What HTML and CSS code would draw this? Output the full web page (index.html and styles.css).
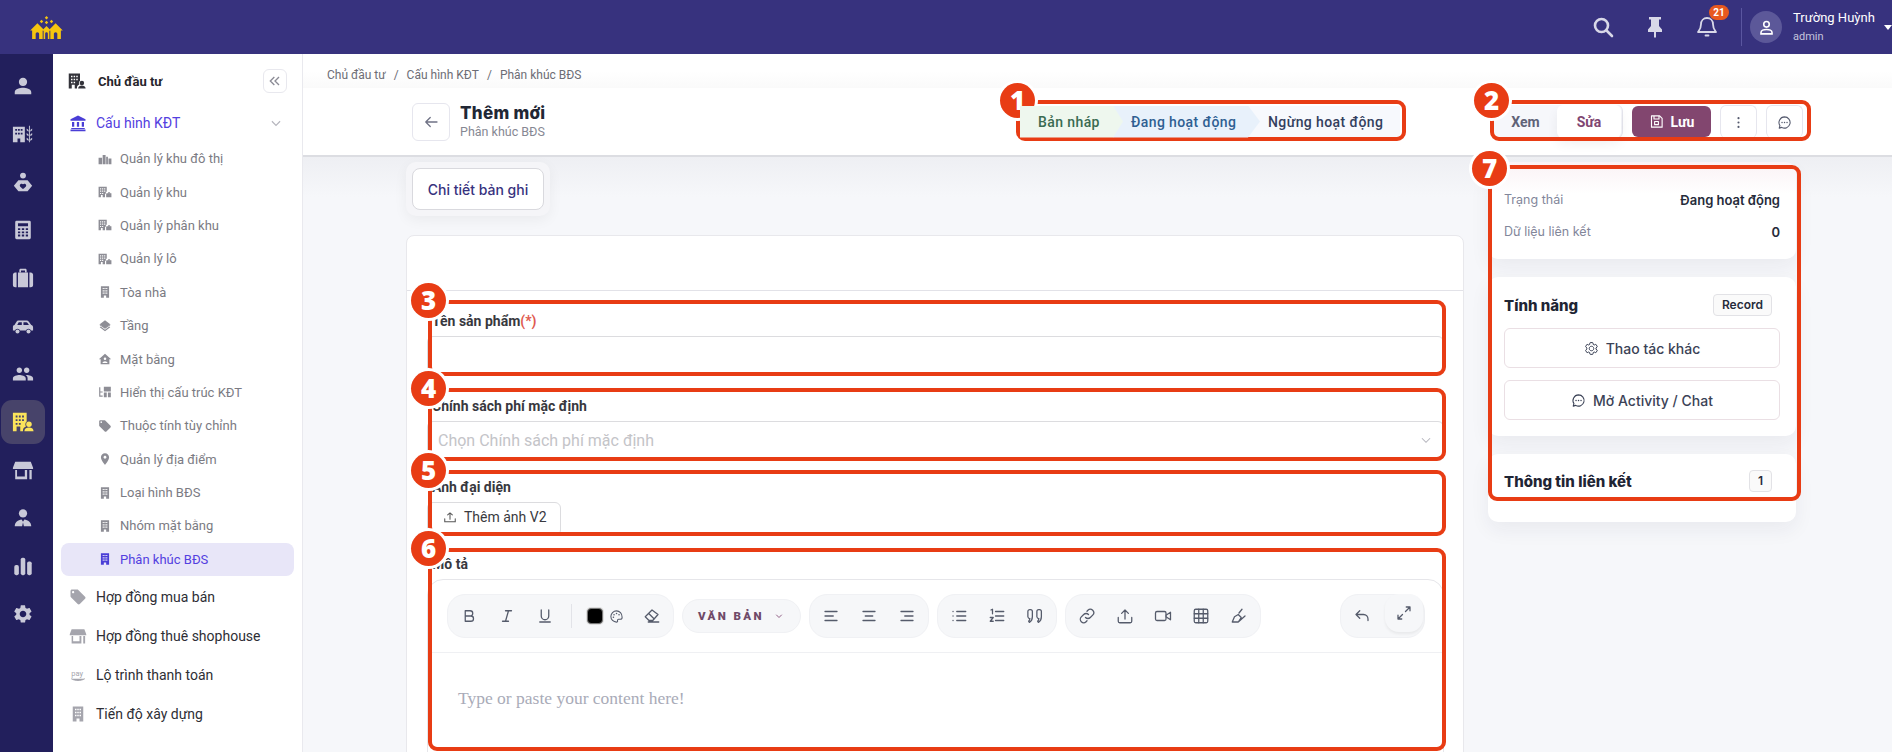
FILE: index.html
```html
<!DOCTYPE html>
<html lang="vi">
<head>
  <meta charset="UTF-8">
  <title>Thêm mới - Phân khúc BĐS</title>
  <link rel="stylesheet" href="styles.css">
</head>
<body>

  <svg class="defs" width="0" height="0">
    <symbol id="i-person" viewBox="0 0 24 24"><path d="M12 12c2.600 0 4.500-2 4.500-4.500S14.600 3 12 3 7.500 5 7.500 7.500 9.400 12 12 12zm0 2c-3 0-9 1.500-9 4.500V21h18v-2.500c0-3-6-4.500-9-4.500z"/></symbol>
    <symbol id="i-farm" viewBox="0 0 24 24"><path fill-rule="evenodd" d="M1 4h13v17H9v-4H6v4H1V4zm2.500 2.500v2h2v-2h-2zm3 0v2h2v-2h-2zm3 0v2h2v-2h-2zm-6 4v2h2v-2h-2zm3 0v2h2v-2h-2zm3 0v2h2v-2h-2z"/><path d="M18.500 3h1v18h-1zM16 6l2 1.500v2L16 8zm6 0l-2 1.500v2L22 8zm-6 5l2 1.500v2L16 13zm6 0l-2 1.500v2L22 13zm-6 5l2 1.500v2L16 18zm6 0l-2 1.500v2L22 18z"/></symbol>
    <symbol id="i-care" viewBox="0 0 24 24"><circle cx="12" cy="5" r="3.200"/><path fill-rule="evenodd" d="M7 10h10l5 6-5 6H7l-5-6 5-6zm5 4.500c-1-1.300-3.500-.6-3.500 1.300 0 1.500 2 2.700 3.500 3.700 1.500-1 3.500-2.200 3.500-3.700 0-1.900-2.500-2.600-3.500-1.300z"/></symbol>
    <symbol id="i-calc" viewBox="0 0 24 24"><path fill-rule="evenodd" d="M5 2h14a1.500 1.500 0 0 1 1.500 1.500v17A1.500 1.500 0 0 1 19 22H5a1.500 1.500 0 0 1-1.500-1.500v-17A1.500 1.500 0 0 1 5 2zm1.500 2.500V8h11V4.500h-11zm0 5.500v2h2.500v-2H6.500zm4.200 0v2h2.600v-2h-2.600zm4.300 0v2h2.500v-2H15zm-8.500 3.500v2h2.500v-2H6.500zm4.200 0v2h2.600v-2h-2.600zm4.300 0v2h2.500v-2H15zm-8.500 3.500v2h2.500v-2H6.500zm4.200 0v2h2.600v-2h-2.600zm4.300 0v2h2.500v-2H15z"/></symbol>
    <symbol id="i-case" viewBox="0 0 24 24"><path fill-rule="evenodd" d="M8 6V3.500C8 2.700 8.700 2 9.500 2h5c.8 0 1.500.7 1.500 1.500V6h-1.800V3.800H9.800V6H8z"/><path d="M1 8.500C1 7.100 2.100 6 3.500 6H5v16H3.500C2.100 22 1 20.900 1 19.500v-11zM6.500 6h11v16h-11zM19 6h1.500C21.900 6 23 7.100 23 8.500v11c0 1.400-1.100 2.500-2.500 2.500H19V6z"/></symbol>
    <symbol id="i-car" viewBox="0 0 24 24"><path fill-rule="evenodd" d="M7 6h9c1 0 1.800.5 2.400 1.300L21 11c1.200.3 2 1.200 2 2.500V17h-2.200a3 3 0 0 0-5.600 0H8.800a3 3 0 0 0-5.600 0H1v-4c0-1.100.7-1.800 1.700-2l2.200-3.700C5.400 6.500 6.100 6 7 6zm.3 2L5.700 11h5V8H7.300zm5.200 0v3h6l-1.700-2.500c-.3-.3-.6-.5-1-.5h-3.300z"/><circle cx="6" cy="18" r="2.200"/><circle cx="18" cy="18" r="2.200"/></symbol>
    <symbol id="i-people" viewBox="0 0 24 24"><path d="M16 11c1.700 0 3-1.300 3-3s-1.300-3-3-3-3 1.300-3 3 1.300 3 3 3zm-8 0c1.700 0 3-1.300 3-3S9.700 5 8 5 5 6.300 5 8s1.300 3 3 3zm0 2c-2.300 0-7 1.200-7 3.500V19h14v-2.500c0-2.300-4.700-3.500-7-3.500zm8 0c-.3 0-.6 0-1 .05 1.200.85 2 2 2 3.450V19h6v-2.500c0-2.300-4.700-3.500-7-3.500z"/></symbol>
    <symbol id="i-owner" viewBox="0 0 24 24"><path fill-rule="evenodd" d="M1 2h15v9.500a4 4 0 0 0-1.500 3 4 4 0 0 0 .7 2.300C13 17.600 12 19 12 21v1H9v-5H5v5H1V2zm3 3v2h2V5H4zm3.500 0v2h2V5h-2zM11 5v2h2V5h-2zM4 9v2h2V9H4zm3.500 0v2h2V9h-2zM11 9v2h2V9h-2zM4 13v2h2v-2H4zm3.500 0v2h2v-2h-2z"/><circle cx="18.500" cy="14.500" r="3"/><path d="M13.500 22c0-2.800 2.500-4 5-4s5 1.200 5 4z"/></symbol>
    <symbol id="i-store" viewBox="0 0 24 24"><path fill-rule="evenodd" d="M3.500 3h17L23 9.500V11H1V9.500L3.500 3zM3 12h2.500v7H14v-7h2.500v10h-13V12zm16 0h2.500v10H19V12z"/></symbol>
    <symbol id="i-agent" viewBox="0 0 24 24"><circle cx="12" cy="7" r="4.500"/><path d="M3 21c0-4.500 3.600-7 7.500-7.500L12 16l1.500-2.500C17.400 14 21 16.500 21 21h-8l-1-4-1 4z"/></symbol>
    <symbol id="i-bars" viewBox="0 0 24 24"><rect x="2.500" y="11" width="5" height="11" rx="2"/><rect x="9.500" y="3" width="5" height="19" rx="2"/><rect x="16.500" y="7" width="5" height="15" rx="2"/></symbol>
    <symbol id="i-gear" viewBox="0 0 24 24"><path fill-rule="evenodd" d="M19.100 12.900c.1-.3.1-.6.1-.9s0-.6-.1-.9l2-1.600c.2-.1.200-.4.100-.6l-1.900-3.300c-.1-.2-.4-.3-.6-.2l-2.400 1c-.5-.4-1-.7-1.600-.9L14.300 2.900c0-.2-.2-.4-.5-.4H10c-.2 0-.4.200-.5.400L9.100 5.500c-.6.200-1.100.6-1.600.9l-2.400-1c-.2-.1-.5 0-.6.200L2.600 8.900c-.1.200-.1.500.1.600l2 1.600c0 .2-.1.600-.1.900s0 .6.100.9l-2 1.600c-.2.100-.2.400-.1.600l1.900 3.300c.1.200.4.300.6.200l2.400-1c.5.400 1 .7 1.600.9l.4 2.500c0 .2.200.4.500.4h3.800c.2 0 .4-.2.500-.4l.4-2.500c.6-.2 1.100-.6 1.600-.9l2.400 1c.2.100.5 0 .6-.2l1.900-3.300c.1-.2.100-.5-.1-.6l-2.200-1.600zM12 15.600c-2 0-3.600-1.600-3.600-3.600s1.600-3.600 3.600-3.600 3.600 1.600 3.600 3.600-1.600 3.600-3.600 3.600z"/></symbol>
    <symbol id="i-bank" viewBox="0 0 24 24"><path d="M12 2L2 7v2h20V7L12 2zM4 10.500h3V17H4zm6.500 0h3V17h-3zm6.500 0h3V17h-3zM3 18.500h18V20H3zM2 20.800h20V23H2z"/></symbol>
    <symbol id="i-city" viewBox="0 0 24 24"><path fill-rule="evenodd" d="M1 10h6v11H1V10zm7-5h5v16H8V5zm6 3h3v13h-3V8zm4 3h5v10h-5V11z"/></symbol>
    <symbol id="i-zone" viewBox="0 0 24 24"><path fill-rule="evenodd" d="M1 3h14v8.500h-1.500V15H12v6H8v-4H5v4H1V3zm2.500 2.500v2h2v-2h-2zm3.500 0v2h2v-2H7zm3.500 0v2h2v-2h-2zm-7 4v2h2v-2h-2zm3.500 0v2h2v-2H7zm3.500 0v2h2v-2h-2zm-7 4v2h2v-2h-2zm3.500 0v2h2v-2H7z"/><path d="M15 14h8v7h-9v-6zM17 14c0-1.400 1-2.200 2-2.200s2 .8 2 2.200h-1.200c0-.6-.3-1-.8-1s-.8.4-.8 1z"/></symbol>
    <symbol id="i-tower" viewBox="0 0 24 24"><path fill-rule="evenodd" d="M5 2h14v20h-5v-4h-4v4H5V2zm3 3v2h2V5H8zm3 0v2h2V5h-2zm3 0v2h2V5h-2zM8 9v2h2V9H8zm3 0v2h2V9h-2zm3 0v2h2V9h-2zm-6 4v2h2v-2H8zm3 0v2h2v-2h-2zm3 0v2h2v-2h-2z"/></symbol>
    <symbol id="i-layers" viewBox="0 0 24 24"><path d="M12 18.500l-7.400-5.700L3 14.100l9 7 9-7-1.600-1.300-7.400 5.700zM12 16l7.400-5.700L21 9l-9-7-9 7 1.600 1.300L12 16z"/><path d="M12 14.600L3 9v1.800l9 6 9-6V9z"/></symbol>
    <symbol id="i-house" viewBox="0 0 24 24"><path fill-rule="evenodd" d="M12 3L1.500 12.500h3V21h15v-8.500h3L12 3zm0 6.500a2.200 2.200 0 1 1 0 4.400 2.200 2.200 0 0 1 0-4.400zM7.500 19c0-2 2.700-3.300 4.500-3.300s4.500 1.300 4.500 3.300h-9z"/></symbol>
    <symbol id="i-tree" viewBox="0 0 24 24"><path d="M2 4h2v16H2zM4 11h4v2H4zM4 18h4v2H4zM10 3h12v8H10zM10 13h5v8h-5zM17 13h5v8h-5z"/></symbol>
    <symbol id="i-tag" viewBox="0 0 24 24"><path d="M21.400 11.600l-9-9C12 2.200 11.500 2 11 2H4C2.900 2 2 2.900 2 4v7c0 .5.200 1 .6 1.400l9 9c.4.400.9.600 1.400.6s1-.2 1.400-.6l7-7c.4-.4.600-.9.600-1.400s-.2-1-.6-1.400zM5.500 7C4.700 7 4 6.300 4 5.500S4.700 4 5.500 4 7 4.700 7 5.500 6.300 7 5.500 7z"/></symbol>
    <symbol id="i-pin" viewBox="0 0 24 24"><path d="M12 2C8.100 2 5 5.100 5 9c0 5.300 7 13 7 13s7-7.700 7-13c0-3.900-3.100-7-7-7zm0 9.500c-1.400 0-2.500-1.100-2.500-2.500s1.100-2.500 2.500-2.500 2.500 1.100 2.500 2.500-1.100 2.500-2.500 2.500z"/></symbol>
  </svg>

  <header class="topbar">
    <svg class="logo" viewBox="0 0 34 24" fill="#f6c50f">
      <path d="M17 0l1.800 1.800L17 3.600l-1.800-1.800zM11.800 4l1.800 1.800-1.800 1.800L10 5.800zM22.200 4L24 5.800l-1.800 1.800-1.800-1.800zM17 5l1.800 1.800L17 8.600l-1.800-1.800z"/>
      <path fill-rule="evenodd" d="M7.500 7.500L15 15h-2v9H2v-9H0zM7.500 17c-1 0-1.800.8-1.800 1.800V24h3.600v-5.200c0-1-.8-1.800-1.800-1.800z"/>
      <path fill-rule="evenodd" d="M26.500 7.500L34 15h-2v9H21v-9h-2zM26.500 17c-1 0-1.800.8-1.800 1.800V24h3.600v-5.200c0-1-.8-1.800-1.800-1.800z"/>
      <path fill-rule="evenodd" d="M17 10.500l4.500 4.500H20v9h-6v-9h-1.500zM17 17c-.8 0-1.400.6-1.400 1.400V24h2.800v-5.600c0-.8-.6-1.400-1.400-1.400z"/>
    </svg>
    <div class="top-tools">
      <svg class="top-icon" viewBox="0 0 24 24" fill="none" stroke="#d8d8e8" stroke-width="2.600" stroke-linecap="round"><circle cx="10.500" cy="10.500" r="6.500"/><path d="M15.500 15.500L21 21"/></svg>
      <svg class="top-icon" viewBox="0 0 24 24" fill="#d8d8e8"><path d="M6 2h12v2.500h-2V11l3 3.500V17h-6v5.500h-2V17H5v-2.500L8 11V4.500H6z"/></svg>
      <div class="bell">
        <svg class="top-icon" viewBox="0 0 24 24" fill="none" stroke="#d8d8e8" stroke-width="1.800" stroke-linecap="round" stroke-linejoin="round"><path d="M12 3c-3.500 0-6 2.700-6 6.200 0 4.500-2 6.300-3 7.800h18c-1-1.500-3-3.300-3-7.800C18 5.700 15.500 3 12 3z"/><path d="M10.500 20.500h3"/></svg>
        <span class="bell-count">21</span>
      </div>
    </div>
    <div class="user">
      <div class="avatar">
        <svg viewBox="0 0 24 24" fill="none" stroke="#fff" stroke-width="2"><circle cx="12" cy="8" r="3.500"/><path d="M5 20v-1.500c0-2.500 3.500-4 7-4s7 1.500 7 4V20z"/></svg>
      </div>
      <div class="user-text">
        <div class="user-name">Trường Huỳnh</div>
        <div class="user-role">admin</div>
      </div>
      <span class="caret"></span>
    </div>
  </header>

  <div class="shell">
    <nav class="rail">
      <a class="rail-item"><svg><use href="#i-person"/></svg></a>
      <a class="rail-item"><svg><use href="#i-farm"/></svg></a>
      <a class="rail-item"><svg><use href="#i-care"/></svg></a>
      <a class="rail-item"><svg><use href="#i-calc"/></svg></a>
      <a class="rail-item"><svg><use href="#i-case"/></svg></a>
      <a class="rail-item"><svg><use href="#i-car"/></svg></a>
      <a class="rail-item"><svg><use href="#i-people"/></svg></a>
      <a class="rail-item rail-active"><svg><use href="#i-owner"/></svg></a>
      <a class="rail-item"><svg><use href="#i-store"/></svg></a>
      <a class="rail-item"><svg><use href="#i-agent"/></svg></a>
      <a class="rail-item"><svg><use href="#i-bars"/></svg></a>
      <a class="rail-item"><svg><use href="#i-gear"/></svg></a>
    </nav>

    <aside class="sidebar">
      <div class="side-head">
        <svg class="side-head-icon"><use href="#i-owner"/></svg>
        <span class="side-head-text">Chủ đầu tư</span>
        <button class="collapse">
          <svg viewBox="0 0 24 24" fill="none" stroke="#8b8b95" stroke-width="2"><path d="M11 6l-6 6 6 6M18 6l-6 6 6 6"/></svg>
        </button>
      </div>
      <div class="side-top side-open">
        <svg class="side-top-icon"><use href="#i-bank"/></svg>
        <span>Cấu hình KĐT</span>
        <svg class="side-chevron" viewBox="0 0 24 24" fill="none" stroke="#b5b5bd" stroke-width="2"><path d="M5 9l7 7 7-7"/></svg>
      </div>
      <a class="side-sub"><svg><use href="#i-city"/></svg>Quản lý khu đô thị</a>
      <a class="side-sub"><svg><use href="#i-zone"/></svg>Quản lý khu</a>
      <a class="side-sub"><svg><use href="#i-zone"/></svg>Quản lý phân khu</a>
      <a class="side-sub"><svg><use href="#i-zone"/></svg>Quản lý lô</a>
      <a class="side-sub"><svg><use href="#i-tower"/></svg>Tòa nhà</a>
      <a class="side-sub"><svg><use href="#i-layers"/></svg>Tầng</a>
      <a class="side-sub"><svg><use href="#i-house"/></svg>Mặt bằng</a>
      <a class="side-sub"><svg><use href="#i-tree"/></svg>Hiển thị cấu trúc KĐT</a>
      <a class="side-sub"><svg><use href="#i-tag"/></svg>Thuộc tính tùy chỉnh</a>
      <a class="side-sub"><svg><use href="#i-pin"/></svg>Quản lý địa điểm</a>
      <a class="side-sub"><svg><use href="#i-tower"/></svg>Loại hình BĐS</a>
      <a class="side-sub"><svg><use href="#i-tower"/></svg>Nhóm mặt bằng</a>
      <a class="side-sub side-sub-active"><svg><use href="#i-tower"/></svg>Phân khúc BĐS</a>
      <div class="side-top side-after"><svg class="side-top-icon"><use href="#i-tag"/></svg><span>Hợp đồng mua bán</span></div>
      <div class="side-top"><svg class="side-top-icon"><use href="#i-store"/></svg><span>Hợp đồng thuê shophouse</span></div>
      <div class="side-top">
        <svg class="side-top-icon" viewBox="0 0 24 24" fill="none" stroke="#a5a5ad" stroke-width="1.300"><text x="3" y="13" font-size="10" font-family="Roboto" fill="#a5a5ad" stroke="none">pay</text><path d="M3 17c5 3 13 3 18 0"/></svg>
        <span>Lộ trình thanh toán</span>
      </div>
      <div class="side-top"><svg class="side-top-icon"><use href="#i-tower"/></svg><span>Tiến độ xây dựng</span></div>
    </aside>

    <main class="main">
      <div class="breadcrumb">
        <span>Chủ đầu tư</span><span class="crumb-sep">/</span><span>Cấu hình KĐT</span><span class="crumb-sep">/</span><span>Phân khúc BĐS</span>
      </div>

      <div class="page-head">
        <div class="page-title-wrap">
          <button class="back-btn">
            <svg viewBox="0 0 24 24" fill="none" stroke="#6f7285" stroke-width="1.700" stroke-linecap="round" stroke-linejoin="round"><path d="M20 12H5M11 6l-6 6 6 6"/></svg>
          </button>
          <div>
            <div class="page-title">Thêm mới</div>
            <div class="page-sub">Phân khúc BĐS</div>
          </div>
        </div>

        <div class="stepper">
          <span class="step step-draft">Bản nháp</span>
          <span class="step step-active">Đang hoạt động</span>
          <span class="step step-stop">Ngừng hoạt động</span>
        </div>

        <div class="actions">
          <div class="segment">
            <span class="seg-view">Xem</span>
            <span class="seg-edit">Sửa</span>
          </div>
          <button class="save-btn">
            <svg viewBox="0 0 24 24" fill="none" stroke="#fff" stroke-width="1.800" stroke-linejoin="round"><path d="M4 3h13l4 4v14H4z"/><path d="M8 3v5h8V3"/><rect x="9" y="12" width="6" height="5"/></svg>
            Lưu
          </button>
          <button class="icon-act">
            <svg viewBox="0 0 24 24" fill="#555a6e"><circle cx="12" cy="5" r="1.700"/><circle cx="12" cy="12" r="1.700"/><circle cx="12" cy="19" r="1.700"/></svg>
          </button>
          <button class="icon-act">
            <svg viewBox="0 0 24 24" fill="none" stroke="#555a6e" stroke-width="1.700" stroke-linejoin="round"><path d="M12 3a9 9 0 1 1-4.500 16.800L3.500 21l1.200-4A9 9 0 0 1 12 3z"/><path d="M8 12h.1M12 12h.1M16 12h.1" stroke-width="2.200" stroke-linecap="round"/></svg>
          </button>
        </div>
      </div>

      <div class="page-body">
        <div class="form-col">
          <div class="tabs">
            <span class="tab">Chi tiết bản ghi</span>
          </div>

          <section class="card">
            <div class="card-top"></div>

            <div class="field">
              <label class="field-label">Tên sản phẩm<span class="req">(*)</span></label>
              <div class="input input-spaced"></div>
            </div>

            <div class="field">
              <label class="field-label">Chính sách phí mặc định</label>
              <div class="input select">
                <span class="placeholder">Chọn Chính sách phí mặc định</span>
                <svg viewBox="0 0 24 24" fill="none" stroke="#b5b5bd" stroke-width="1.800"><path d="M5 9l7 7 7-7"/></svg>
              </div>
            </div>

            <div class="field">
              <label class="field-label">Ảnh đại diện</label>
              <button class="upload">
                <svg viewBox="0 0 24 24" fill="none" stroke="#555" stroke-width="1.800" stroke-linecap="round"><path d="M12 16V5M8 8.500L12 5l4 3.500M3 15v5h18v-5"/></svg>
                Thêm ảnh V2
              </button>
            </div>

            <div class="field field-last">
              <label class="field-label">Mô tả</label>
              <div class="editor">
                <div class="toolbar">
                  <div class="tool-group">
                    <span class="tool"><svg viewBox="0 0 24 24"><path d="M7 5h6.500a3.500 3.500 0 0 1 0 7H7zM7 12h7.500a3.500 3.500 0 0 1 0 7H7z"/></svg></span>
                    <span class="tool"><svg viewBox="0 0 24 24"><path d="M10 5h8M6 19h8M14 5l-4 14"/></svg></span>
                    <span class="tool"><svg viewBox="0 0 24 24"><path d="M7 4v8a5 5 0 0 0 10 0V4M5 20h14"/></svg></span>
                    <span class="tool-sep"></span>
                    <span class="tool-color">
                      <span class="swatch"></span>
                      <svg viewBox="0 0 24 24"><path d="M12 3a9 9 0 0 0 0 18c1.500 0 2-1 1.700-2-.4-1.300.3-2.500 1.800-2.500H18c1.800 0 3-1.500 3-3.500 0-5.500-4-10-9-10z"/><path d="M8 9h.1M12 7h.1M16 9h.1M7 13h.1" stroke-width="2.400" stroke-linecap="round"/></svg>
                    </span>
                    <span class="tool"><svg viewBox="0 0 24 24"><path d="M3 13l9-9 8 6-7 8H8zM7 20h14M8 9l7 7"/></svg></span>
                  </div>
                  <div class="tool-group tool-select">
                    <span class="select-text">VĂN BẢN</span>
                    <svg viewBox="0 0 24 24"><path d="M7 10l5 5 5-5"/></svg>
                  </div>
                  <div class="tool-group">
                    <span class="tool"><svg viewBox="0 0 24 24"><path d="M4 6h16M4 12h11M4 18h16"/></svg></span>
                    <span class="tool"><svg viewBox="0 0 24 24"><path d="M4 6h16M7 12h10M4 18h16"/></svg></span>
                    <span class="tool"><svg viewBox="0 0 24 24"><path d="M4 6h16M9 12h11M4 18h16"/></svg></span>
                  </div>
                  <div class="tool-group">
                    <span class="tool"><svg viewBox="0 0 24 24"><path d="M9 6h12M9 12h12M9 18h12M4 6h.1M4 12h.1M4 18h.1"/></svg></span>
                    <span class="tool"><svg viewBox="0 0 24 24"><path d="M10 6h11M10 12h11M10 18h11M4 4l2-1v6M3 14h4l-4 5h4"/></svg></span>
                    <span class="tool"><svg viewBox="0 0 24 24"><path d="M2.500 6A2.500 2.500 0 0 1 5 3.500h1A2.500 2.500 0 0 1 8.500 6v7c0 3.500-1.500 6-4 7.500L3.500 19c1-.8 1.500-2 1.700-3.500A3 3 0 0 1 2.500 13zM14.500 6A2.500 2.500 0 0 1 17 3.500h1A2.500 2.500 0 0 1 20.500 6v7c0 3.500-1.500 6-4 7.500l-1-1.500c1-.8 1.500-2 1.700-3.500A3 3 0 0 1 14.500 13z"/></svg></span>
                  </div>
                  <div class="tool-group">
                    <span class="tool"><svg viewBox="0 0 24 24"><path d="M10 14a4.500 4.500 0 0 0 6.400 0l3.200-3.200a4.500 4.500 0 0 0-6.400-6.400L12 5.600M14 10a4.500 4.500 0 0 0-6.400 0l-3.200 3.200a4.500 4.500 0 0 0 6.400 6.400l1.200-1.200"/></svg></span>
                    <span class="tool"><svg viewBox="0 0 24 24"><path d="M12 16V4M7.500 8.500L12 4l4.500 4.500M3 14v5a2 2 0 0 0 2 2h14a2 2 0 0 0 2-2v-5"/></svg></span>
                    <span class="tool"><svg viewBox="0 0 24 24"><rect x="2" y="6" width="14" height="12" rx="2"/><path d="M16 11l6-4v10l-6-4"/></svg></span>
                    <span class="tool"><svg viewBox="0 0 24 24"><rect x="3" y="3" width="18" height="18" rx="2"/><path d="M3 9h18M3 15h18M9 3v18M15 3v18"/></svg></span>
                    <span class="tool"><svg viewBox="0 0 24 24"><path d="M3 20h8l9-8M3 20l3-7 5-3 4 4-4 6M12 8l4-5"/></svg></span>
                  </div>
                  <div class="tool-group tool-end">
                    <span class="tool"><svg viewBox="0 0 24 24"><path d="M4 10l5-5M4 10l5 5M4 10h10a6 6 0 0 1 6 6v2"/></svg></span>
                    <span class="tool tool-full"><svg viewBox="0 0 24 24"><path d="M14 10l6-6M15 4h5v5M10 14l-6 6M4 15v5h5"/></svg></span>
                  </div>
                </div>
                <div class="editor-body">Type or paste your content here!</div>
              </div>
            </div>
          </section>
        </div>

        <div class="info-col">
          <section class="info-card info-status">
            <div class="info-row"><span class="info-key">Trạng thái</span><span class="info-val">Đang hoạt động</span></div>
            <div class="info-row"><span class="info-key">Dữ liệu liên kết</span><span class="info-val">0</span></div>
          </section>
          <section class="info-card info-features">
            <div class="info-title-row"><span class="info-title">Tính năng</span><span class="chip">Record</span></div>
            <button class="wide-btn">
              <svg class="gear-line"><use href="#i-gear"/></svg>
              Thao tác khác
            </button>
            <button class="wide-btn">
              <svg viewBox="0 0 24 24" fill="none" stroke="#3b4256" stroke-width="1.700" stroke-linejoin="round"><path d="M12 3a9 9 0 1 1-4.500 16.800L3.500 21l1.200-4A9 9 0 0 1 12 3z"/><path d="M8 12h.1M12 12h.1M16 12h.1" stroke-width="2.200" stroke-linecap="round"/></svg>
              Mở Activity / Chat
            </button>
          </section>
          <section class="info-card info-links">
            <div class="info-title-row"><span class="info-title">Thông tin liên kết</span><span class="chip">1</span></div>
          </section>
        </div>
      </div>
    </main>
  </div>

  <!-- annotation boxes drawn over the screenshot -->
  <div class="mark mark-1"><span class="mark-num">1</span></div>
  <div class="mark mark-2"><span class="mark-num">2</span></div>
  <div class="mark mark-3"><span class="mark-num">3</span></div>
  <div class="mark mark-4"><span class="mark-num">4</span></div>
  <div class="mark mark-5"><span class="mark-num">5</span></div>
  <div class="mark mark-6"><span class="mark-num">6</span></div>
  <div class="mark mark-7"><span class="mark-num">7</span></div>

</body>
</html>
```

FILE: styles.css
```css
body {
  position: relative;
  margin: 0;
  height: 752px;
  overflow: hidden;
  font-family: Roboto, 'Liberation Sans', sans-serif;
  color: #26262c;
  background-color: #f6f7fa;
}

button {
  font-family: inherit;
  cursor: pointer;
}

.defs {
  position: absolute;
}

/* top bar */
.topbar {
  display: flex;
  align-items: center;
  height: 54px;
  background-color: #37327e;
}

.logo {
  width: 33px;
  height: 23px;
  margin-left: 30px;
}

.top-tools {
  display: flex;
  align-items: center;
  gap: 28px;
  margin-left: auto;
}

.top-icon {
  display: block;
  width: 24px;
  height: 24px;
}

.bell {
  position: relative;
}

.bell-count {
  position: absolute;
  top: -10px;
  right: -10px;
  padding: 0 4px;
  min-width: 12px;
  height: 15px;
  line-height: 15px;
  font-size: 10px;
  font-weight: 700;
  text-align: center;
  color: #fff;
  background-color: #e8591f;
  border-radius: 8px;
}

.user {
  display: flex;
  align-items: center;
  height: 38px;
  margin-left: 22px;
  padding-left: 8px;
  border-left: 1px solid #5a56a0;
}

.avatar {
  display: flex;
  align-items: center;
  justify-content: center;
  width: 32px;
  height: 32px;
  border-radius: 50%;
  background-color: #5c5899;
}

.avatar svg {
  width: 19px;
  height: 19px;
}

.user-text {
  width: 90px;
  margin-left: 11px;
}

.user-name {
  margin-top: -2px;
  font-size: 13px;
  line-height: 17px;
  color: #fff;
}

.user-role {
  margin-top: 4px;
  font-size: 11px;
  line-height: 14px;
  color: #c4c4dc;
}

.caret {
  width: 0;
  height: 0;
  margin-left: 1px;
  border-left: 4px solid transparent;
  border-right: 4px solid transparent;
  border-top: 5px solid #fff;
}

/* page shell */
.shell {
  display: flex;
  height: 698px;
}

.rail {
  display: flex;
  flex-direction: column;
  gap: 4px;
  flex: 0 0 53px;
  padding-top: 10px;
  box-sizing: border-box;
  background-color: #221f5c;
}

.rail-item {
  display: flex;
  align-items: center;
  justify-content: center;
  width: 44px;
  height: 44px;
  margin-left: 1px;
  border-radius: 11px;
  fill: #c9c9d8;
}

.rail-item svg {
  width: 22px;
  height: 22px;
}

.rail-active {
  fill: #fbe45b;
  background-color: #47436a;
}

/* second level menu */
.sidebar {
  flex: 0 0 249px;
  padding-top: 8px;
  background-color: #fff;
  border-right: 1px solid #e9e9ee;
}

.side-head {
  display: flex;
  align-items: center;
  height: 38px;
  padding-left: 15px;
}

.side-head-icon {
  width: 18px;
  height: 18px;
  fill: #33333a;
}

.side-head-text {
  margin-left: 12px;
  font-size: 13px;
  font-weight: 700;
}

.collapse {
  display: flex;
  align-items: center;
  justify-content: center;
  width: 24px;
  height: 24px;
  margin-left: auto;
  margin-right: 15px;
  padding: 0;
  background-color: #fff;
  border: 1px solid #e8e8ee;
  border-radius: 6px;
}

.collapse svg {
  width: 16px;
  height: 16px;
}

.side-top {
  display: flex;
  align-items: center;
  height: 39px;
  padding-left: 16px;
  font-size: 14px;
  color: #2e2e35;
}

.side-top span {
  margin-left: 9px;
}

.side-top-icon {
  flex: 0 0 18px;
  width: 18px;
  height: 18px;
  fill: #a5a5ad;
}

.side-open {
  height: 38px;
  margin-top: 4px;
  color: #5340e0;
}

.side-open .side-top-icon {
  fill: #4a3ed6;
}

.side-after {
  margin-top: 1px;
}

.side-chevron {
  width: 14px;
  height: 14px;
  margin-left: auto;
  margin-right: 19px;
}

.side-sub {
  display: flex;
  align-items: center;
  height: 33.4px;
  margin: 0 8px;
  padding-left: 37px;
  font-size: 13px;
  color: #7b7b83;
  border-radius: 8px;
}

.side-sub svg {
  flex: 0 0 14px;
  width: 14px;
  height: 14px;
  margin-right: 8px;
  fill: #8d8d95;
}

.side-sub-active {
  color: #5340e0;
  background-color: #e8e6f8;
}

.side-sub-active svg {
  fill: #4a3ed6;
}

/* content */
.main {
  flex: 1;
  min-width: 0;
}

.breadcrumb {
  display: flex;
  align-items: center;
  height: 34px;
  padding: 7px 0 0 24px;
  box-sizing: border-box;
  font-size: 12px;
  color: #6d6d75;
  background: linear-gradient(#fff 50%, #fafafa);
}

.crumb-sep {
  margin: 0 8px;
}

.page-head {
  display: flex;
  align-items: center;
  height: 69px;
  padding-left: 109px;
  box-sizing: border-box;
  background-color: #fff;
  border-bottom: 2px solid #dcdde2;
}

.page-title-wrap {
  display: flex;
  align-items: center;
  gap: 10px;
  flex: 0 0 608px;
}

.back-btn {
  display: flex;
  align-items: center;
  justify-content: center;
  width: 38px;
  height: 38px;
  padding: 0;
  background-color: #fff;
  border: 1px solid #e6e6ee;
  border-radius: 6px;
}

.back-btn svg {
  width: 18px;
  height: 18px;
}

.page-title {
  margin-top: -2px;
  font-family: Inter, sans-serif;
  font-size: 17px;
  font-weight: 800;
  line-height: 20px;
  letter-spacing: 0.3px;
  color: #212735;
}

.page-sub {
  margin-top: 1px;
  font-size: 12.5px;
  line-height: 15px;
  color: #868893;
}

.stepper {
  display: flex;
  flex: 0 0 380px;
  height: 32px;
  font-size: 14px;
  font-weight: 500;
  letter-spacing: 0.4px;
}

.step {
  display: flex;
  align-items: center;
  height: 100%;
  box-sizing: border-box;
}

.step-draft {
  z-index: 2;
  width: 103px;
  padding-left: 18px;
  color: #3a6b52;
  background-color: #eef7ee;
  clip-path: polygon(0 0, 93px 0, 100% 50%, 93px 100%, 0 100%);
}

.step-active {
  z-index: 1;
  width: 147px;
  margin-left: -10px;
  padding-left: 18px;
  color: #2f5f92;
  background-color: #e8f1fb;
  clip-path: polygon(0 0, 135px 0, 100% 50%, 135px 100%, 0 100%);
}

.step-stop {
  flex: 1;
  margin-left: -12px;
  padding-left: 20px;
  color: #33405e;
  background-color: #f7f9fd;
}

.actions {
  display: flex;
  align-items: center;
  gap: 9px;
  margin-left: 94px;
}

.segment {
  display: flex;
  align-items: center;
  height: 33px;
  width: 128px;
  font-size: 14px;
  font-weight: 700;
  background-color: #f6f7fb;
  border-radius: 6px;
  border-right: 1px solid #e6e6ee;
}

.seg-view {
  width: 63px;
  text-align: center;
  color: #5f6378;
}

.seg-edit {
  display: flex;
  align-items: center;
  justify-content: center;
  width: 64px;
  height: 100%;
  color: #7f4571;
  background-color: #fff;
  border-radius: 6px;
  box-shadow: 0 6px 12px rgba(0, 0, 0, 0.06);
}

.save-btn {
  display: flex;
  align-items: center;
  justify-content: center;
  gap: 7px;
  width: 79px;
  height: 31px;
  padding: 0;
  font-size: 14px;
  font-weight: 700;
  color: #fff;
  background-color: #82466f;
  border: none;
  border-radius: 6px;
}

.save-btn svg {
  width: 15px;
  height: 15px;
}

.icon-act {
  display: flex;
  align-items: center;
  justify-content: center;
  width: 37px;
  height: 33px;
  padding: 0;
  background-color: #fff;
  border: 1px solid #e6e6ee;
  border-bottom: none;
  border-radius: 6px;
}

.icon-act svg {
  width: 15px;
  height: 15px;
}

.page-body {
  display: flex;
  gap: 24px;
  height: 595px;
  overflow: hidden;
  padding-left: 103px;
  background: linear-gradient(#eeeff3, #f6f7fa 40px);
}

.form-col {
  flex: 0 0 1058px;
}

.tabs {
  width: 144px;
  height: 54px;
  margin-top: 5px;
  padding: 6px;
  box-sizing: border-box;
  background-color: #f5f5f8;
  border-radius: 10px;
  box-shadow: 0 4px 14px rgba(0, 0, 0, 0.05);
}

.tab {
  display: flex;
  align-items: center;
  justify-content: center;
  height: 42px;
  font-family: Inter, sans-serif;
  font-size: 14px;
  font-weight: 500;
  color: #37327e;
  background-color: #fff;
  border: 1px solid #d9d9de;
  border-radius: 8px;
  box-sizing: border-box;
}

.card {
  margin-top: 19px;
  height: 560px;
  padding: 0 19px 0 20px;
  background-color: #fff;
  border: 1px solid #e8e8ec;
  border-radius: 8px;
}

.card-top {
  height: 54px;
  margin: 0 -19px 0 -20px;
  border-bottom: 1px solid #e2e2e8;
}

.field {
  margin-top: 16px;
}

.card-top + .field {
  margin-top: 20px;
}

.field-label {
  display: block;
  height: 20px;
  margin-bottom: 5px;
  padding-left: 5px;
  font-size: 14px;
  font-weight: 700;
  line-height: 20px;
  color: #38383e;
}

.req {
  color: #e05a50;
}

.input {
  height: 40px;
  box-sizing: border-box;
  border: 1px solid #dcdcdf;
  border-radius: 6px;
}

.input-spaced {
  margin-bottom: 20px;
}

.select {
  display: flex;
  align-items: center;
  justify-content: space-between;
  padding: 0 10px 2px;
}

.placeholder {
  font-size: 16px;
  color: #c4c4c8;
}

.select svg {
  width: 14px;
  height: 14px;
}

.upload {
  display: flex;
  align-items: center;
  gap: 7px;
  width: 134px;
  height: 34px;
  margin-bottom: 18px;
  padding: 0 0 4px 15px;
  font-size: 14px;
  color: #3a3a40;
  background-color: #fff;
  border: 1px solid #dcdcdf;
  border-radius: 6px;
}

.upload svg {
  width: 14px;
  height: 14px;
}

.field-last {
  margin-top: 0;
}

.editor {
  height: 300px;
  border: 1px solid #e6e6ea;
  border-radius: 16px;
}

.toolbar {
  display: flex;
  align-items: center;
  height: 72px;
  padding: 0 18px 0 19px;
  gap: 8px;
  border-bottom: 1px solid #eff0f3;
}

.tool-group {
  display: flex;
  align-items: center;
  height: 44px;
  padding: 0 2px;
  background-color: #f6f7f9;
  border: 1px solid #f0f1f4;
  border-radius: 18px;
  box-sizing: border-box;
}

.tool {
  display: flex;
  align-items: center;
  justify-content: center;
  width: 38px;
  height: 38px;
}

.tool svg,
.tool-color svg,
.tool-select svg {
  width: 18px;
  height: 18px;
  fill: none;
  stroke: #555b6b;
  stroke-width: 1.7;
  stroke-linecap: round;
  stroke-linejoin: round;
}

.tool-sep {
  width: 1px;
  height: 24px;
  margin-left: 7px;
  background-color: #e2e3e8;
}

.tool-color {
  display: flex;
  align-items: center;
  gap: 6px;
  width: 61px;
  padding-left: 15px;
  box-sizing: border-box;
}

.tool-color svg {
  width: 15px;
  height: 15px;
}

.swatch {
  flex: 0 0 14px;
  height: 14px;
  background-color: #000;
  border: 1px solid #777;
  border-radius: 4px;
  box-shadow: 0 0 0 1px #ddd;
}

.tool-select {
  justify-content: center;
  gap: 9px;
  width: 119px;
  height: 34px;
}

.select-text {
  font-size: 11.5px;
  font-weight: 900;
  letter-spacing: 2.4px;
  color: #6f4a68;
}

.tool-select svg {
  width: 12px;
  height: 12px;
  stroke: #7f4571;
}

.tool-end {
  width: 85px;
  margin-left: auto;
}

.tool-full {
  position: relative;
  left: 4px;
  top: -3px;
  background-color: #f6f7f9;
  border-radius: 14px;
  box-shadow: 0 2px 3px rgba(0, 0, 0, 0.06);
}

.editor-body {
  padding: 35px 0 0 30px;
  font-family: 'Liberation Serif', serif;
  font-size: 17.5px;
  color: #a9abb8;
}

/* right column */
.info-col {
  flex: 0 0 308px;
  display: flex;
  flex-direction: column;
  gap: 18px;
  padding-top: 5px;
}

.info-card {
  padding: 0 16px;
  box-sizing: border-box;
  background-color: #fff;
  border-radius: 10px;
  box-shadow: 0 8px 20px rgba(30, 30, 60, 0.06);
}

.info-status {
  height: 97px;
  padding-top: 26px;
  background: linear-gradient(#faf2f5, #fff 32px);
}

.info-row {
  display: flex;
  justify-content: space-between;
  height: 32px;
  font-family: Inter, sans-serif;
  line-height: 24px;
}

.info-key {
  font-size: 12.5px;
  color: #82869a;
}

.info-val {
  font-size: 13px;
  font-weight: 600;
  color: #262b3a;
}

.info-features {
  height: 159px;
  padding-top: 17px;
}

.info-title-row {
  display: flex;
  align-items: center;
  justify-content: space-between;
  height: 22px;
  margin-bottom: 12px;
  padding-right: 8px;
}

.info-title {
  font-family: Inter, sans-serif;
  font-size: 15px;
  font-weight: 800;
  color: #1f2534;
}

.chip {
  padding: 0 8px;
  height: 20px;
  line-height: 20px;
  font-family: Inter, sans-serif;
  font-size: 12px;
  font-weight: 600;
  color: #262b3a;
  background-color: #fafafa;
  border: 1px solid #e2e2e6;
  border-radius: 4px;
}

.wide-btn {
  display: flex;
  align-items: center;
  justify-content: center;
  gap: 7px;
  width: 100%;
  height: 40px;
  margin-bottom: 12px;
  padding: 0;
  font-family: Inter, sans-serif;
  font-size: 14px;
  font-weight: 500;
  color: #3b4256;
  background-color: #fff;
  border: 1px solid #eadfe4;
  border-radius: 6px;
}

.wide-btn svg {
  width: 15px;
  height: 15px;
}

.gear-line {
  fill: none;
  stroke: #3b4256;
  stroke-width: 1.6;
}

.info-links {
  height: 68px;
  padding-top: 16px;
}

/* annotation overlay */
.mark {
  position: absolute;
  box-sizing: border-box;
  border: 4px solid #e83c14;
  border-radius: 9px;
}

.mark-num {
  position: absolute;
  left: -21px;
  top: -21px;
  width: 35px;
  height: 35px;
  font-family: 'Open Sans', sans-serif;
  font-size: 26px;
  font-weight: 800;
  line-height: 35px;
  text-align: center;
  color: #fff;
  background-color: #e83c14;
  border-radius: 50%;
  box-shadow: 0 0 0 3px #fff;
}

.mark-1 {
  left: 1016px;
  top: 100px;
  width: 390px;
  height: 41px;
}

.mark-2 {
  left: 1490px;
  top: 100px;
  width: 321px;
  height: 41px;
}

.mark-3 {
  left: 428px;
  top: 300px;
  width: 1018px;
  height: 76px;
}

.mark-4 {
  left: 428px;
  top: 388px;
  width: 1018px;
  height: 73px;
}

.mark-5 {
  left: 428px;
  top: 470px;
  width: 1018px;
  height: 66px;
}

.mark-6 {
  left: 428px;
  top: 548px;
  width: 1018px;
  height: 203px;
}

.mark-7 {
  left: 1488px;
  top: 165px;
  width: 313px;
  height: 336px;
}

.mark-1 .mark-num,
.mark-2 .mark-num {
  left: -20px;
}

.mark-7 .mark-num {
  left: -20px;
  top: -18px;
}
```
